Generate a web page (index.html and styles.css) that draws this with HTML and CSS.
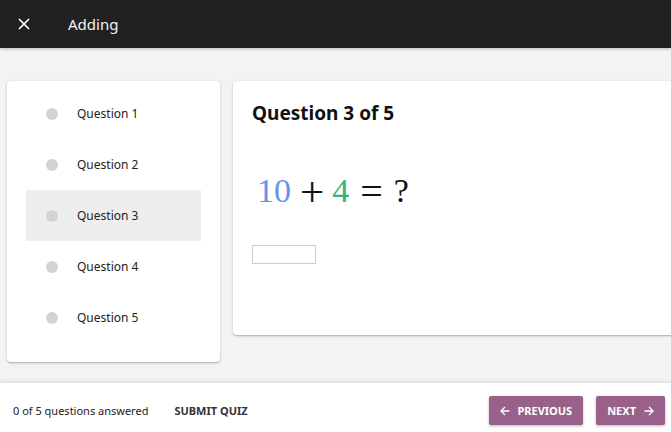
FILE: index.html
```html
<!DOCTYPE html>
<html>
<head>
<meta charset="utf-8">
<link rel="stylesheet" href="styles.css">
</head>
<body>
<div class="app">
  <header class="topbar">
    <button class="close" aria-label="Close">
      <svg width="12" height="12" viewBox="0 0 12 12"><path d="M1 1L11 11M11 1L1 11" stroke="#fff" stroke-width="1.7" fill="none"/></svg>
    </button>
    <span class="title">Adding</span>
  </header>
  <main class="main">
    <nav class="card qlist">
      <div class="qrow"><span class="dot"></span><span>Question 1</span></div>
      <div class="qrow"><span class="dot"></span><span>Question 2</span></div>
      <div class="qrow active"><span class="dot"></span><span>Question 3</span></div>
      <div class="qrow"><span class="dot"></span><span>Question 4</span></div>
      <div class="qrow"><span class="dot"></span><span>Question 5</span></div>
    </nav>
    <section class="card qcard">
      <h2 class="qtitle">Question 3 of 5</h2>
      <div class="math"><span class="blue">10</span><span class="op">+</span><span class="green">4</span><span class="rel">=</span><span>?</span></div>
      <input class="answer" type="text">
    </section>
  </main>
  <footer class="footer">
    <span class="progress">0 of 5 questions answered</span>
    <span class="submit">SUBMIT QUIZ</span>
    <div class="nav">
      <button class="btn prev"><svg class="arr" width="10" height="10" viewBox="0 0 10 10"><path d="M9.5 5H1M5 1L1 5L5 9" stroke="#fff" stroke-width="1.3" fill="none"/></svg>PREVIOUS</button>
      <button class="btn next">NEXT<svg class="arr r" width="10" height="10" viewBox="0 0 10 10"><path d="M0.5 5H9M5 1L9 5L5 9" stroke="#fff" stroke-width="1.3" fill="none"/></svg></button>
    </div>
  </footer>
</div>
</body>
</html>
```
FILE: styles.css
```css
html, body { margin: 0; padding: 0; }
body {
  font-family: "Noto Sans", "Open Sans", sans-serif;
  background: #f3f3f3;
  width: 671px;
  height: 432px;
  overflow: hidden;
}
.app { display: flex; flex-direction: column; height: 432px; }
.topbar {
  height: 48px;
  flex: none;
  background: #212121;
  display: flex;
  align-items: center;
  box-shadow: 0 1px 3px rgba(0,0,0,0.25);
  position: relative;
  z-index: 2;
}
.close {
  background: none; border: 0; padding: 0;
  width: 12px; height: 12px;
  margin-left: 18px;
  display: flex;
}
.title { color: #f2f2f2; font-size: 15px; margin-left: 38px; }
.main {
  flex: 1;
  display: flex;
  align-items: flex-start;
  gap: 13px;
  padding: 33px 0 0 7px;
  overflow: hidden;
}
.card {
  background: #fff;
  border-radius: 4px;
  box-shadow: 0 1px 3px rgba(0,0,0,0.2), 0 1px 1px rgba(0,0,0,0.12);
}
.qlist {
  width: 213px;
  flex: none;
  box-sizing: border-box;
  padding: 7px 19px 19px;
}
.qrow {
  height: 51px;
  display: flex;
  align-items: center;
  font-size: 12px;
  color: #222;
  padding-left: 20px;
}
.qrow.active { background: #eeeeee; }
.dot {
  width: 12px; height: 12px; border-radius: 50%;
  background: #d3d3d3;
  margin-right: 19px;
}
.qcard {
  width: 460px;
  flex: none;
  height: 254px;
  box-sizing: border-box;
  padding: 17px 19px;
}
.qtitle {
  margin: 0;
  font-size: 19px;
  font-weight: 700;
  color: #111;
  line-height: 30px;
}
.math {
  font-family: "Liberation Serif", "DejaVu Serif", serif;
  font-size: 34px;
  margin-top: 43px;
  padding-left: 5px;
  height: 40px;
  line-height: 40px;
  color: #111;
  white-space: nowrap;
}
.math span { display: inline-block; }
.blue { color: #6495ed; }
.green { color: #3cb07f; }
.op { font-size: 43px; line-height: 34px; margin: 0 8px 0 9px; vertical-align: -0.09em; }
.rel { font-size: 40px; line-height: 34px; margin: 0 11px 0 11px; vertical-align: -0.08em; }
.answer {
  display: block;
  margin-top: 34px;
  width: 64px;
  height: 19px;
  box-sizing: border-box;
  border: 1px solid #cccccc;
  padding: 0;
}
.footer {
  height: 49px;
  flex: none;
  box-sizing: border-box;
  background: #fff;
  display: flex;
  align-items: center;
  padding: 6px 6px 0 13px;
  box-shadow: 0 -1px 4px rgba(0,0,0,0.12);
  font-size: 11px;
}
.progress { color: #222; }
.submit { margin-left: 26px; font-weight: 700; color: #333; }
.nav { margin-left: auto; display: flex; gap: 13px; }
.btn {
  font-family: "Noto Sans", "Open Sans", sans-serif;
  background: #996189;
  color: #fff;
  border: 0;
  border-radius: 2px;
  height: 29px;
  font-size: 11px;
  font-weight: 700;
  display: flex;
  align-items: center;
  box-shadow: 0 1px 3px rgba(0,0,0,0.3);
}
.prev { padding: 0 11px 0 11px; }
.next { padding: 0 11px 0 11px; }
.arr { margin-right: 7px; }
.arr.r { margin-right: 0; margin-left: 8px; }
```
